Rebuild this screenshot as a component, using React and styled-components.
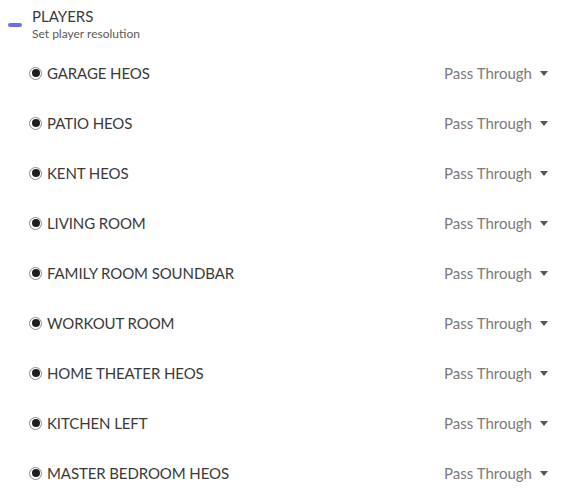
import React from "react";
import styled, { createGlobalStyle } from "styled-components";

const Global = createGlobalStyle`
  html, body { margin: 0; padding: 0; background: #fff; }
  body { font-family: Lato, "Open Sans", sans-serif; }
`;

const Page = styled.div`
  width: 568px;
  height: 502px;
  overflow: hidden;
  background: #fff;
`;

const Header = styled.div`
  display: flex;
  align-items: flex-start;
  padding: 7px 0 0 8px;
`;

const Dash = styled.div`
  width: 14px;
  height: 4px;
  border-radius: 2px;
  background: #6c6cf0;
  margin-top: 16px;
  margin-right: 10px;
`;

const HeadText = styled.div`
  display: flex;
  flex-direction: column;
`;

const Title = styled.div`
  font-size: 15px;
  color: #3a3a3a;
  line-height: 19px;
`;

const Sub = styled.div`
  font-size: 12px;
  color: #5a5a5a;
  line-height: 14px;
  margin-top: 1px;
`;

const List = styled.div`
  display: flex;
  flex-direction: column;
  padding: 7px 20px 0 29px;
`;

const Row = styled.div`
  display: flex;
  align-items: center;
  justify-content: space-between;
  height: 50px;
`;

const Left = styled.div`
  display: flex;
  align-items: center;
`;

const Radio = styled.span`
  box-sizing: border-box;
  width: 13px;
  height: 13px;
  border-radius: 50%;
  border: 1px solid #8a8a8a;
  display: flex;
  align-items: center;
  justify-content: center;
  margin-right: 5px;
  &::after {
    content: "";
    width: 8px;
    height: 8px;
    border-radius: 50%;
    background: #1e1e1e;
  }
`;

const Name = styled.span`
  font-size: 15px;
  color: #3a3a3a;
  letter-spacing: -0.1px;
`;

const Select = styled.div`
  display: flex;
  align-items: center;
  font-size: 15px;
  color: #7a7a7a;
`;

const Arrow = styled.svg`
  margin-left: 8px;
`;

const players = [
  "GARAGE HEOS",
  "PATIO HEOS",
  "KENT HEOS",
  "LIVING ROOM",
  "FAMILY ROOM SOUNDBAR",
  "WORKOUT ROOM",
  "HOME THEATER HEOS",
  "KITCHEN LEFT",
  "MASTER BEDROOM HEOS",
];

export default function App() {
  return (
    <Page>
      <Global />
      <Header>
        <Dash />
        <HeadText>
          <Title>PLAYERS</Title>
          <Sub>Set player resolution</Sub>
        </HeadText>
      </Header>
      <List>
        {players.map((p) => (
          <Row key={p}>
            <Left>
              <Radio />
              <Name>{p}</Name>
            </Left>
            <Select>
              Pass Through
              <Arrow width="8" height="5" viewBox="0 0 8 5">
                <path d="M0 0 L8 0 L4 5 Z" fill="#555" />
              </Arrow>
            </Select>
          </Row>
        ))}
      </List>
    </Page>
  );
}
